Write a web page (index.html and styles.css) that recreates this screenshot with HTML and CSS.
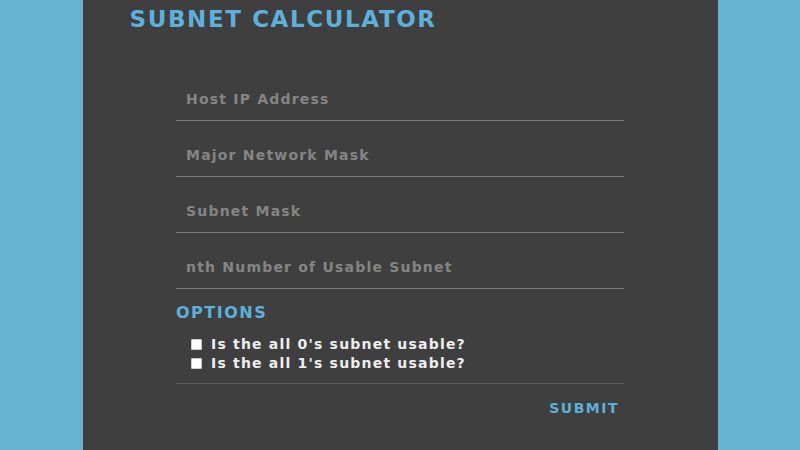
FILE: index.html
```html
<!DOCTYPE html>
<html lang="en">
<head>
  <meta charset="UTF-8">
  <meta name="viewport" content="width=device-width, initial-scale=1.0">
  <title>Subnet Calculator</title>
  <link rel="stylesheet" href="styles.css">
</head>
<body>
  <div class="calculator">
    <div class="header">SUBNET CALCULATOR</div>

    <form class="calc-form" onsubmit="return false">
      <input type="text" class="field" placeholder="Host IP Address">
      <input type="text" class="field" placeholder="Major Network Mask">
      <input type="text" class="field" placeholder="Subnet Mask">
      <input type="text" class="field" placeholder="nth Number of Usable Subnet">

      <div class="options-title">OPTIONS</div>
      <div class="options">
        <label class="option"><input type="checkbox"> Is the all 0's subnet usable?</label>
        <label class="option"><input type="checkbox"> Is the all 1's subnet usable?</label>
      </div>

      <div class="actions">
        <button class="submit-button">SUBMIT</button>
      </div>
    </form>
  </div>
</body>
</html>
```

FILE: styles.css
```css
body {
  margin: 0;
  font-family: 'DejaVu Sans', sans-serif;
  background: #66b3d2;
  display: flex;
  justify-content: center;
  height: 100vh;
  overflow: hidden;
}

.calculator {
  width: 635px;
  height: 100vh;
  background: #3f3f3f;
  box-sizing: border-box;
  padding-top: 6px;
}

.header {
  font-size: 23px;
  font-weight: bold;
  color: #5db0da;
  letter-spacing: 1.6px;
  margin-left: 47px;
  line-height: 26px;
}

.calc-form {
  width: 448px;
  margin: 33px auto 0;
  display: flex;
  flex-direction: column;
}

.field {
  height: 56px;
  padding: 13px 10px 0;
  box-sizing: border-box;
  background: transparent;
  border: none;
  border-bottom: 1px solid #7a7a7a;
  color: #ddd;
  font-family: inherit;
  font-size: 14px;
  font-weight: bold;
  letter-spacing: 1.2px;
  outline: none;
}

.field::placeholder {
  color: #858585;
}

.options-title {
  margin-top: 14px;
  font-size: 16px;
  font-weight: bold;
  color: #5db0da;
  letter-spacing: 1.5px;
  line-height: 20px;
}

.options {
  margin: 12px 0 0 15px;
  display: flex;
  flex-direction: column;
}

.option {
  font-size: 14px;
  font-weight: bold;
  color: #eee;
  letter-spacing: 1.2px;
  line-height: 19px;
  display: flex;
  align-items: center;
}

.option input {
  appearance: none;
  width: 11px;
  height: 11px;
  margin: 0 9px 0 0;
  background: #fff;
  border: 1px solid #ccc;
  border-radius: 1px;
}

.actions {
  margin-top: 10px;
  border-top: 1px solid #5a5a5a;
  display: flex;
  justify-content: flex-end;
  padding: 16px 5px 0 0;
}

.submit-button {
  background: none;
  border: none;
  padding: 0;
  color: #5db0da;
  font-family: inherit;
  font-size: 14px;
  font-weight: bold;
  letter-spacing: 1.5px;
  cursor: pointer;
}
```
